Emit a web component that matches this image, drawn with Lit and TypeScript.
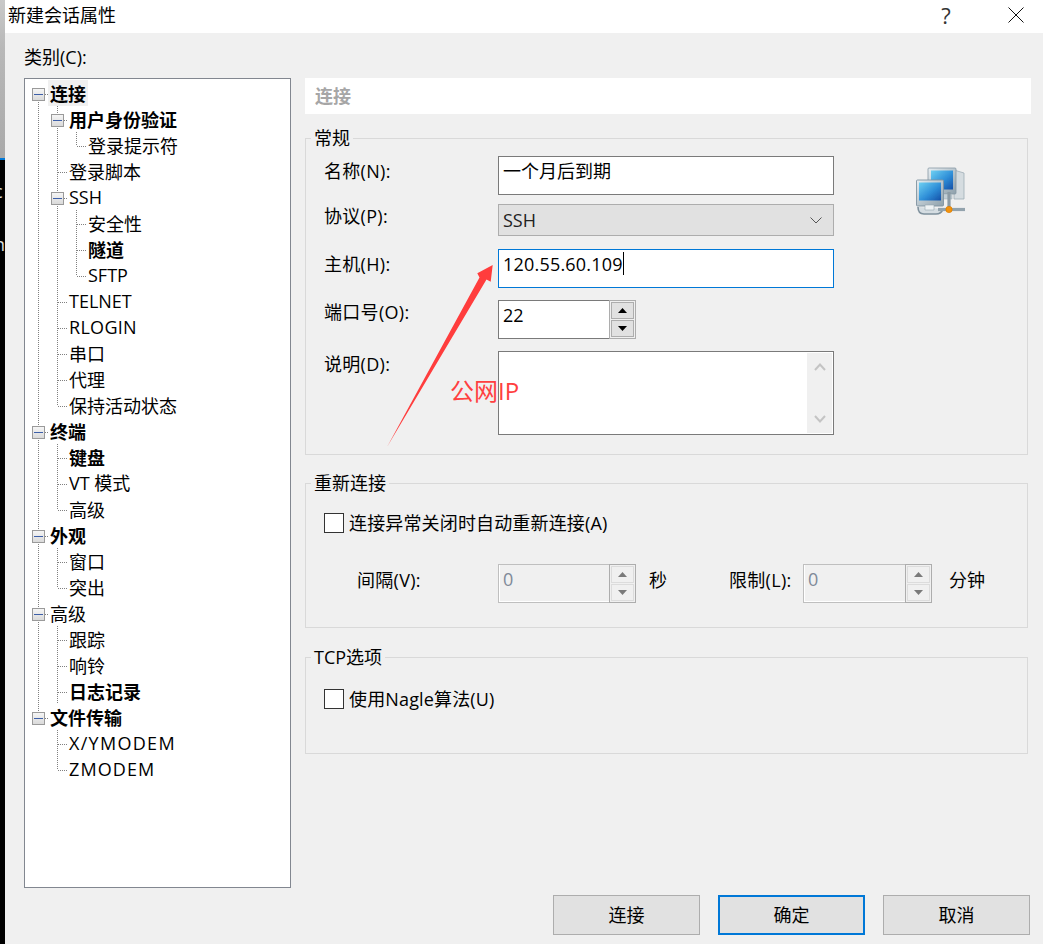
import { LitElement, html, css, svg } from "lit";
import { customElement } from "lit/decorators.js";

type Cell = "v" | "t" | "c" | "b" | "bf" | "bl" | "e";
interface Row { label: string; cells: Cell[]; bold?: boolean; sel?: boolean; wide?: string; }

const rows: Row[] = [
  { label: "连接", cells: ["bf"], bold: true, sel: true },
  { label: "用户身份验证", cells: ["v", "b"], bold: true },
  { label: "登录提示符", cells: ["v", "v", "c"] },
  { label: "登录脚本", cells: ["v", "t"] },
  { label: "SSH", cells: ["v", "b"] },
  { label: "安全性", cells: ["v", "v", "t"] },
  { label: "隧道", cells: ["v", "v", "t"], bold: true },
  { label: "SFTP", cells: ["v", "v", "c"] },
  { label: "TELNET", cells: ["v", "t"] },
  { label: "RLOGIN", cells: ["v", "t"], wide: "w1" },
  { label: "串口", cells: ["v", "t"] },
  { label: "代理", cells: ["v", "t"] },
  { label: "保持活动状态", cells: ["v", "c"] },
  { label: "终端", cells: ["b"], bold: true },
  { label: "键盘", cells: ["v", "t"], bold: true },
  { label: "VT 模式", cells: ["v", "t"] },
  { label: "高级", cells: ["v", "c"] },
  { label: "外观", cells: ["b"], bold: true },
  { label: "窗口", cells: ["v", "t"] },
  { label: "突出", cells: ["v", "c"] },
  { label: "高级", cells: ["b"] },
  { label: "跟踪", cells: ["v", "t"] },
  { label: "响铃", cells: ["v", "t"] },
  { label: "日志记录", cells: ["v", "t"], bold: true },
  { label: "文件传输", cells: ["bl"], bold: true },
  { label: "X/YMODEM", cells: ["e", "t"], wide: "w2" },
  { label: "ZMODEM", cells: ["e", "c"], wide: "w3" },
];

const DOT = "stroke:#808080;stroke-width:1;stroke-dasharray:1 1;fill:none";

function cellContent(c: Cell) {
  const vfull = svg`<line x1="9.5" y1="0" x2="9.5" y2="26" style=${DOT} />`;
  const horiz = svg`<line x1="10" y1="14.5" x2="19" y2="14.5" style=${DOT} />`;
  const box = svg`
    <rect x="3.5" y="8.5" width="12" height="12" fill="url(#bx)" stroke="#9a9a9a" />
    <line x1="5" y1="14.5" x2="14" y2="14.5" stroke="#3d5fa8" />`;
  switch (c) {
    case "v": return vfull;
    case "t": return svg`${vfull}${horiz}`;
    case "c": return svg`<line x1="9.5" y1="0" x2="9.5" y2="14" style=${DOT} />${horiz}`;
    case "b": return svg`${vfull}${horiz}${box}`;
    case "bf": return svg`<line x1="9.5" y1="14" x2="9.5" y2="26" style=${DOT} />${horiz}${box}`;
    case "bl": return svg`<line x1="9.5" y1="0" x2="9.5" y2="14" style=${DOT} />${horiz}${box}`;
    default: return svg``;
  }
}

const isCjk = (s: string) => /^[^\x00-\x7f]+$/.test(s);

@customElement("app-root")
export class AppRoot extends LitElement {
  static styles = css`
    :host {
      display: block; position: relative; width: 1043px; height: 944px; overflow: hidden;
      background: #f0f0f0; color: #000;
      font-family: "Open Sans", "Noto Sans CJK SC", sans-serif; font-size: 18px; line-height: 24px;
    }
    * { box-sizing: border-box; }
    .screen { display: flex; height: 944px; }
    .strip { width: 5px; flex: none; display: flex; flex-direction: column; overflow: hidden; }
    .strip-top { height: 158px; flex: none; background: linear-gradient(#c9c9c9, #b8b8b8 30%, #a9a9a9); }
    .strip-line { height: 2px; flex: none; background: #0078d7; }
    .strip-bottom { flex: 1; background: #000; color: #ddd; padding-top: 19px; font-size: 18px; }
    .strip-bottom span { display: block; margin-left: -6px; height: 53px; }
    .dialog { flex: 1; display: flex; flex-direction: column; min-width: 0; }
    .titlebar { height: 33px; flex: none; background: #fff; display: flex; align-items: center; padding-left: 3px; }
    .title { flex: 1; position: relative; top: -2px; }
    .help { width: 24px; font-size: 22px; text-align: center; margin-right: 50px; color: #333; position: relative; top: -2px; }
    .close { width: 16px; height: 16px; margin-right: 19px; display: block; position: relative; top: -2px; }
    .body { flex: 1; display: flex; flex-direction: column; padding: 12px 12px 0 19px; }
    .cat { height: 24px; margin-bottom: 9px; }
    .main { display: flex; gap: 14px; }
    .tree {
      width: 267px; height: 810px; flex: none; background: #fff; border: 1px solid #828790;
      padding: 1px 0 0 4px;
    }
    .row { display: flex; height: 26px; line-height: 26px; white-space: nowrap; }
    .cell { width: 19px; height: 26px; flex: none; display: block; }
    .lbl { margin-left: 2px; }
    .lbl.bold { font-weight: 700; }
    .lbl.sel { background: #f0f0f0; margin-left: 0; padding: 0 2px; }
    .lbl.cjk span { position: relative; top: 1px; }
    .lbl.w1 { letter-spacing: .3px; }
    .lbl.w2 { letter-spacing: 1.3px; }
    .lbl.w3 { letter-spacing: 1.1px; }
    .defs { position: absolute; width: 0; height: 0; }
    .right { width: 726px; flex: none; display: flex; flex-direction: column; }
    .head {
      height: 36px; background: #fff; padding-left: 10px; line-height: 36px; font-weight: 700; color: #a6a6a6;
      flex: none; margin-bottom: 12px;
    }
    fieldset {
      width: 723px; margin: 0; padding: 0; border: 1px solid #d9d9d9; min-width: 0;
    }
    legend { margin-left: 5px; padding: 0 3px; line-height: 24px; height: 24px; }
    .g1 { height: 329px; margin-bottom: 16px; }
    .g2 { height: 157px; margin-bottom: 17px; }
    .g3 { height: 109px; }
    .g1-inner { display: flex; padding: 6px 0 0 18px; }
    .form {
      display: grid; grid-template-columns: 174px 336px;
      grid-template-rows: 39px 30px 39px 39px 84px; row-gap: 12px;
    }
    .fl { white-space: nowrap; letter-spacing: .3px; }
    .l1 { padding-top: 3px; }
    .l2 { margin-top: -3px; }
    .l3 { padding-top: 3px; }
    .l4 { margin-top: 0; }
    .l5 { padding-top: 1px; }
    .r2 { margin-top: -3px; height: 32px; }
    .input {
      background: #fff; border: 1px solid #7a7a7a; padding-left: 4px; display: flex; align-items: center; white-space: nowrap;
    }
    .input span { position: relative; top: -5px; }
    .input.focus span { letter-spacing: .2px; }
    .input.focus { border-color: #0078d7; }
    .caret { width: 1px; height: 23px; background: #000; flex: none; position: relative; top: -5px; }
    .combo {
      background: #e1e1e1; border: 1px solid #adadad; padding: 0 11px 0 4px; display: flex; align-items: center;
      justify-content: space-between; color: #222;
    }
    .chev { width: 12px; height: 7px; display: block; }
    .spin { display: flex; height: 39px; }
    .spin .field {
      flex: 1; min-width: 0; background: #fff; border: 1px solid #7a7a7a; border-right: 0; padding-left: 4px; display: flex; align-items: center;
    }
    .spin .field span { position: relative; top: -5px; }
    .spin .btns {
      width: 27px; flex: none; border: 1px solid #adadad; padding: 1px; display: flex; flex-direction: column; gap: 1px;
    }
    .spin .btns div {
      flex: 1; background: #e1e1e1; border: 1px solid #adadad; display: flex; align-items: center; justify-content: center;
    }
    .tri { width: 9px; height: 5px; display: block; fill: #000; }
    .spin.off .field {
      background: #f0f0f0; border: 1px solid #bfbfbf; border-right: 0; color: #7f8a99;
      box-shadow: inset 1px -1px 0 #fff;
    }
    .spin.off .btns { border-color: #adadad; }
    .spin.off .btns div { background: #f0f0f0; border-color: #dcdcdc; }
    .spin.off .tri { fill: #7a7a7a; }
    .desc { background: #fff; border: 1px solid #7a7a7a; display: flex; justify-content: flex-end; padding: 1px 0; }
    .sbar {
      width: 25px; background: #f0f0f0; display: flex; flex-direction: column; justify-content: space-between; align-items: center;
      padding: 10px 0; margin-right: 1px;
    }
    .sbar svg { width: 12px; height: 8px; display: block; }
    .computer { width: 52px; height: 52px; display: block; margin: 11px 0 0 82px; flex: none; }
    .check-row { display: flex; align-items: center; }
    .box { width: 20px; height: 20px; background: #fff; border: 1px solid #333; flex: none; }
    .g2-check { padding: 16px 0 0 18px; }
    .check-row .t { margin-left: 5px; position: relative; top: 0; letter-spacing: .15px; }
    .limits { display: flex; align-items: center; margin-top: 29px; padding-left: 51px; }
    .limits .name { white-space: nowrap; position: relative; top: -4px; letter-spacing: .3px; }
    .lab1 { width: 141px; }
    .lab2 { width: 74px; }
    .unit { white-space: nowrap; position: relative; top: -4px; margin-left: 13px; }
    .u1 { width: 80px; }
    .u2 { margin-left: 17px; }
    .s1 { width: 138px; }
    .s2 { width: 129px; }
    .g3 .check-row { padding: 18px 0 0 18px; }
    .footer { display: flex; justify-content: flex-end; gap: 18px; margin-top: 7px; padding-right: 1px; }
    .btn {
      width: 147px; height: 40px; background: #e1e1e1; border: 1px solid #adadad; display: flex; align-items: center; justify-content: center;
    }
    .btn.def { border: 2px solid #0078d7; }
    .anno { position: absolute; left: 0; top: 0; width: 1043px; height: 944px; pointer-events: none; }
    .anno-t {
      position: absolute; left: 450px; top: 374px; font-size: 24px; line-height: 34px; color: #ff4040; white-space: nowrap;
    }
  `;

  private spin(value: string, off: boolean, cls = "") {
    return html`<div class="spin ${off ? "off" : ""} ${cls}">
      <div class="field"><span>${value}</span></div>
      <div class="btns">
        <div><svg class="tri" viewBox="0 0 9 5"><path d="M4.5 0L9 5H0z" /></svg></div>
        <div><svg class="tri" viewBox="0 0 9 5"><path d="M0 0H9L4.5 5z" /></svg></div>
      </div>
    </div>`;
  }

  private computer() {
    return html`<svg class="computer" viewBox="0 0 52 52">
      <defs>
        <linearGradient id="scr" x1="0" y1="0" x2="1" y2="1">
          <stop offset="0" stop-color="#6ed0f2" /><stop offset="0.55" stop-color="#2f8fd8" /><stop offset="1" stop-color="#1450a8" />
        </linearGradient>
        <linearGradient id="bez" x1="0" y1="0" x2="1" y2="1">
          <stop offset="0" stop-color="#e8eef2" /><stop offset="1" stop-color="#8ea0ab" />
        </linearGradient>
        <filter id="soft"><feGaussianBlur stdDeviation="0.35" /></filter>
      </defs>
      <g filter="url(#soft)">
        <path d="M38 3l10 3v26H38z" fill="#d5dce0" stroke="#9fadb6" stroke-width=".8" />
        <rect x="12" y="1" width="28" height="26" rx="1" fill="url(#bez)" stroke="#8597a3" stroke-width=".8" />
        <rect x="15" y="3.500" width="22" height="19" fill="url(#scr)" />
        <path d="M24 27h12v5H24z" fill="#c2ced5" stroke="#98a8b2" stroke-width=".5" />
        <rect x="0.500" y="13" width="27" height="26" rx="1" fill="url(#bez)" stroke="#7f93a0" stroke-width=".9" />
        <rect x="3" y="15.500" width="22" height="18" fill="url(#scr)" />
        <path d="M2 40c0 4 2 7 6 7h12c4 0 6-2 7-5" fill="#d5dde2" stroke="#7f919d" stroke-width="1.600" />
        <path d="M9 38h9v5H9z" fill="#eef2f4" stroke="#94a4ae" stroke-width=".6" />
        <path d="M33 25v17" stroke="#8c9ba5" stroke-width="3.200" />
        <path d="M22 42.500H49" stroke="#93a3ad" stroke-width="3.200" />
        <circle cx="33" cy="42.500" r="3.200" fill="#f39208" stroke="#d27504" stroke-width=".5" />
      </g>
    </svg>`;
  }

  render() {
    return html`
      <svg class="defs"><defs><linearGradient id="bx" x1="0" y1="0" x2="0" y2="1">
        <stop offset="0" stop-color="#f6f6f6" /><stop offset="1" stop-color="#d9d9d9" />
      </linearGradient></defs></svg>
      <div class="screen">
        <div class="strip">
          <div class="strip-top"></div>
          <div class="strip-line"></div>
          <div class="strip-bottom"><span>c</span><span>n</span></div>
        </div>
        <div class="dialog">
          <div class="titlebar">
            <div class="title">新建会话属性</div>
            <div class="help">?</div>
            <svg class="close" viewBox="0 0 16 16"><path d="M.5.5l15 15M15.5.5l-15 15" stroke="#111" fill="none" /></svg>
          </div>
          <div class="body">
            <div class="cat">类别(C):</div>
            <div class="main">
              <div class="tree">
                ${rows.map(
                  (r) => html`<div class="row">
                    ${r.cells.map((c) => html`<svg class="cell" viewBox="0 0 19 26">${cellContent(c)}</svg>`)}
                    <div class="lbl ${r.bold ? "bold" : ""} ${r.sel ? "sel" : ""} ${isCjk(r.label) ? "cjk" : ""} ${r.wide ?? ""}"><span>${r.label}</span></div>
                  </div>`
                )}
              </div>
              <div class="right">
                <div class="head">连接</div>
                <fieldset class="g1">
                  <legend>常规</legend>
                  <div class="g1-inner">
                    <div class="form">
                      <div class="fl l1">名称(N):</div>
                      <div class="input"><span>一个月后到期</span></div>
                      <div class="fl l2">协议(P):</div>
                      <div class="combo r2"><span>SSH</span>
                        <svg class="chev" viewBox="0 0 12 7"><path d="M.5.5L6 6l5.5-5.5" fill="none" stroke="#555" /></svg>
                      </div>
                      <div class="fl l3">主机(H):</div>
                      <div class="input focus"><span>120.55.60.109</span><i class="caret"></i></div>
                      <div class="fl l4">端口号(O):</div>
                      ${this.spin("22", false, "s1")}
                      <div class="fl l5">说明(D):</div>
                      <div class="desc">
                        <div class="sbar">
                          <svg viewBox="0 0 12 8"><path d="M1 7l5-5.500L11 7" fill="none" stroke="#c4c4c4" stroke-width="2" /></svg>
                          <svg viewBox="0 0 12 8"><path d="M1 1l5 5.500L11 1" fill="none" stroke="#c4c4c4" stroke-width="2" /></svg>
                        </div>
                      </div>
                    </div>
                    ${this.computer()}
                  </div>
                </fieldset>
                <fieldset class="g2">
                  <legend>重新连接</legend>
                  <div class="check-row g2-check"><div class="box"></div><div class="t">连接异常关闭时自动重新连接(A)</div></div>
                  <div class="limits">
                    <div class="name lab1">间隔(V):</div>
                    ${this.spin("0", true, "s1")}
                    <div class="unit u1">秒</div>
                    <div class="name lab2">限制(L):</div>
                    ${this.spin("0", true, "s2")}
                    <div class="unit u2">分钟</div>
                  </div>
                </fieldset>
                <fieldset class="g3">
                  <legend>TCP选项</legend>
                  <div class="check-row"><div class="box"></div><div class="t">使用Nagle算法(U)</div></div>
                </fieldset>
              </div>
            </div>
            <div class="footer">
              <div class="btn"><span>连接</span></div>
              <div class="btn def"><span>确定</span></div>
              <div class="btn"><span>取消</span></div>
            </div>
          </div>
        </div>
      </div>
      <svg class="anno" viewBox="0 0 1043 944">
        <path d="M387 447L479.500 277.500L477.300 273.300L492.700 265L490.700 281.700L486.500 279.500Z" fill="#ff3d3d" />
      </svg>
      <div class="anno-t">公网IP</div>
    `;
  }
}
